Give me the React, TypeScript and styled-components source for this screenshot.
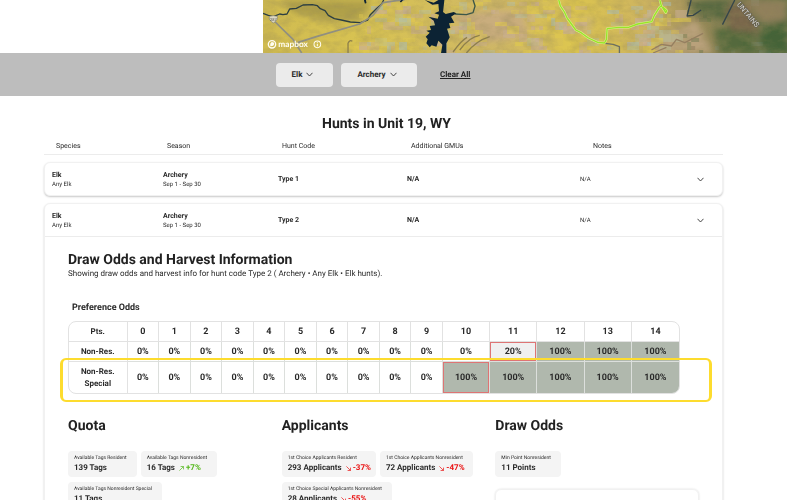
import React, { useState } from "react";
import styled, { createGlobalStyle, css } from "styled-components";

const GlobalStyle = createGlobalStyle`
  *, *::before, *::after { box-sizing: border-box; }
  html { scrollbar-width: none; }
  body {
    margin: 0;
    background: #fff;
    color: #2a2a2a;
    font-family: Roboto, "Liberation Sans", sans-serif;
    text-rendering: geometricPrecision;
  }
  h1, h2, h3, p, ul, dl, dd { margin: 0; padding: 0; }
  ul { list-style: none; }
  button { font: inherit; color: inherit; cursor: pointer; text-rendering: inherit; }
`;

const heading = css`
  font-weight: 700;
  color: #222;
`;

const MapBand = styled.header`
  display: flex;
  justify-content: flex-end;
  height: 53px;
`;

const MapSvg = styled.svg`
  display: block;
  width: 66.6%;
  height: 100%;
`;

const FilterBar = styled.nav`
  display: flex;
  align-items: center;
  gap: 8px;
  height: 43px;
  padding-left: 276px;
  background: #bdbdbd;
`;

const FilterButton = styled.button<{ $wide?: boolean }>`
  display: flex;
  align-items: center;
  justify-content: center;
  gap: 4px;
  width: ${(p) => (p.$wide ? 76 : 57)}px;
  height: 24px;
  padding: 0 5px 0 1px;
  border: 0;
  border-radius: 4px;
  background: #ebebeb;
  font-size: 8px;
  font-weight: 700;
`;

const ClearLink = styled.a`
  margin-left: 15px;
  color: #222;
  font-size: 8px;
  font-weight: 700;
  text-decoration: underline;
`;

const Page = styled.main`
  padding: 20px 64px 0 44px;
`;

const PageTitle = styled.h1`
  ${heading}
  padding-left: 6px;
  font-size: 14px;
  line-height: 16px;
  text-align: center;
`;

const huntColumns = css`
  display: grid;
  grid-template-columns: 111px 115px 129px 173px 1fr;
  align-items: center;
`;

const ColumnHeads = styled.div`
  ${huntColumns}
  grid-template-columns: 111px 115px 129px 182px 1fr;
  height: 23px;
  padding: 5px 12px 0;
  border-bottom: 1px solid #ececec;
  font-size: 7px;
`;

const HuntList = styled.ul`
  display: flex;
  flex-direction: column;
  gap: 7px;
  padding-top: 7px;
`;

const HuntCard = styled.li`
  border: 1px solid #f1f1f1;
  border-radius: 6px;
  background: #fff;
  box-shadow: 0 1px 2px rgba(0, 0, 0, 0.22);
`;

const HuntRow = styled.button`
  ${huntColumns}
  width: 100%;
  height: 32px;
  padding: 0 18px 0 7px;
  border: 0;
  background: none;
  text-align: left;
  font-size: 7px;
  font-weight: 700;
`;

const HuntNotes = styled.span`
  display: flex;
  align-items: center;
  justify-content: space-between;
`;

const Stack = styled.span`
  display: flex;
  flex-direction: column;
  padding-top: 2px;
  line-height: 9px;
`;

const Minor = styled.span`
  font-size: 6px;
  font-weight: 400;
`;

const Details = styled.section`
  min-height: 320px;
  padding: 15px 23px 0;
  border-top: 1px solid #ececec;
`;

const DetailsTitle = styled.h2`
  ${heading}
  font-size: 14px;
  line-height: 16px;
`;

const DetailsText = styled.p`
  font-size: 8px;
  line-height: 11px;
`;

const OddsTitle = styled.h3`
  margin: 24px 0 8px 4px;
  font-size: 9px;
  line-height: 10px;
`;

const OddsWrap = styled.div`
  position: relative;
`;

const Highlight = styled.div`
  position: absolute;
  left: -8px;
  right: -13px;
  bottom: -8px;
  height: 44px;
  border: 2px solid #fddc2e;
  border-left-width: 3px;
  border-right-width: 3px;
  border-radius: 6px;
`;

const OddsTable = styled.table`
  width: 97%;
  table-layout: fixed;
  border: 1px solid #e2e2e2;
  border-radius: 8px;
  border-spacing: 0;
  overflow: hidden;
  font-size: 9px;
  font-weight: 700;
  text-align: center;
`;

const OddsLine = styled.tr<{ $height: number }>`
  height: ${(p) => p.$height}px;
  line-height: 12px;
`;

const OddsHead = styled.th`
  padding: 0;
  border-right: 1px solid #e2e2e2;
  border-bottom: 1px solid #e2e2e2;
  tr:last-child > &[scope="row"] { border-bottom: 0; }
  &:first-child { font-size: 8px; }
  &:last-child { border-right: 0; }
`;

type Tone = "none" | "sure" | "low" | "first";

const OddsCell = styled.td<{ $tone: Tone }>`
  padding: 0;
  border-right: 1px solid #dcdfdc;
  border-bottom: 1px solid #dcdfdc;
  background: ${(p) => (p.$tone === "none" ? "#fff" : p.$tone === "low" ? "#f0f0f0" : "#b0b8ad")};
  ${(p) =>
    (p.$tone === "low" || p.$tone === "first") &&
    css`
      box-shadow: inset 0 0 0 1px #de7474;
    `}
  tr:last-child > & { border-bottom: 0; }
  &:last-child { border-right: 0; }
`;

const Summary = styled.div`
  display: grid;
  grid-template-columns: repeat(3, 1fr);
  gap: 10px;
  padding-top: 24px;
`;

const SummaryTitle = styled.h2`
  ${heading}
  margin-bottom: 17px;
  font-size: 14px;
  line-height: 16px;
`;

const Chips = styled.dl`
  display: flex;
  flex-wrap: wrap;
  gap: 5px 4px;
`;

const Chip = styled.div`
  height: 26px;
  padding: 4px 10px 0 6px;
  border-radius: 4px;
  background: #f4f4f4;
  white-space: nowrap;
`;

const ChipLabel = styled.dt`
  font-size: 5px;
  line-height: 7px;
`;

const ChipValue = styled.dd`
  display: flex;
  align-items: center;
  gap: 4px;
  && { margin-right: -5px; }
  font-size: 8px;
  font-weight: 700;
  line-height: 12px;
`;

const Trend = styled.span<{ $up?: boolean }>`
  display: flex;
  align-items: center;
  gap: 2px;
  color: ${(p) => (p.$up ? "#55b81c" : "#ea1212")};
`;

const ChartCard = styled.div`
  height: 120px;
  margin-top: 12px;
  border: 1px solid #f1f1f1;
  border-radius: 6px;
  box-shadow: 0 0 2px rgba(0, 0, 0, 0.15);
`;

const Chevron = () => (
  <svg width="7" height="5" viewBox="0 0 7 5" fill="none" stroke="#333" strokeWidth="0.9" aria-hidden="true">
    <path d="M0.5 0.8 3.5 4 6.5 0.8" />
  </svg>
);

const TrendArrow = ({ up }: { up?: boolean }) => (
  <svg width="5" height="5" viewBox="0 0 5 5" fill="none" stroke="currentColor" strokeWidth="0.7" aria-hidden="true">
    {up ? <path d="M0.4 4.6 4.4 0.6M1.6 0.5H4.5V3.4" /> : <path d="M0.4 0.4 4.4 4.4M4.5 1.6V4.5H1.6" />}
  </svg>
);

function makeRandom(seed: number) {
  let s = seed;
  return () => {
    s = (s * 16807) % 2147483647;
    return s / 2147483647;
  };
}

function parcels() {
  const rand = makeRandom(4711);
  const list: { x: number; y: number; w: number; h: number; fill: string; o: number }[] = [];
  for (let i = 0; i < 240; i++) {
    const x = Math.round((250 + rand() * 1250) / 12) * 12;
    const y = Math.round((rand() * 165) / 12) * 12 - 6;
    const forest = x > 1250;
    const pool = forest
      ? ["#5b7346", "#4c6840", "#9a8560", "#8a9b90", "#7b6a4e"]
      : ["#c9b096", "#b9bd98", "#b0bfae", "#cbaf8f", "#dfc850", "#dfc850"];
    list.push({
      x,
      y,
      w: 12 + Math.floor(rand() * 3) * 12,
      h: 12 + Math.floor(rand() * 2) * 12,
      fill: pool[Math.floor(rand() * pool.length)],
      o: forest ? 0.35 : 0.4 + rand() * 0.3,
    });
  }
  return list;
}

const PARCELS = parcels();

const UNIT_BORDER =
  "M887 0 892 18 904 36 912 54 938 90 954 98 976 114 1004 127 1024 129 1030 118 1032 86 1068 82 1096 82 1124 72 1166 65 1174 46 1189 22 1195 18 1190 0M1195 18 1208 38 1211 32 1200 22";

const TerrainMap = () => (
  <MapSvg viewBox="0 0 1572 159" preserveAspectRatio="none" role="img" aria-label="Map of unit 19">
    <defs>
      <linearGradient id="land">
        <stop offset="0" stopColor="#d0bb50" />
        <stop offset="0.2" stopColor="#d8c352" />
        <stop offset="0.45" stopColor="#cfb766" />
        <stop offset="0.6" stopColor="#dbc44f" />
        <stop offset="0.74" stopColor="#ccb262" />
        <stop offset="0.82" stopColor="#a0905c" />
        <stop offset="0.9" stopColor="#7d7a50" />
        <stop offset="1" stopColor="#5f7146" />
      </linearGradient>
      <filter id="relief" x="0" y="0" width="100%" height="100%">
        <feTurbulence type="fractalNoise" baseFrequency="0.025 0.04" numOctaves="4" seed="8" />
        <feColorMatrix values="0 0 0 0 0.3  0 0 0 0 0.25  0 0 0 0 0.1  1.8 0.8 0 0 -1.05" />
      </filter>
      <filter id="soft" x="-5%" y="-5%" width="110%" height="110%">
        <feGaussianBlur stdDeviation="10" />
      </filter>
    </defs>
    <rect width="1572" height="159" fill="url(#land)" />
    <g filter="url(#soft)">
      <path d="M60 0H330L290 60 200 62 90 40Z" fill="#968b45" opacity="0.6" />
      <path d="M560 40 780 30 800 110 640 130Z" fill="#c6a888" opacity="0.7" />
      <path d="M900 60 990 50 980 110 900 90Z" fill="#c3ab85" opacity="0.6" />
      <path d="M1190 110 1300 60 1350 159H1160Z" fill="#bba37e" opacity="0.9" />
    </g>
    {PARCELS.map((p, i) => (
      <rect key={i} x={p.x} y={p.y} width={p.w} height={p.h} fill={p.fill} opacity={p.o} />
    ))}
    <g filter="url(#soft)">
      <path d="M1270 0 1400 0 1390 60 1300 50Z" fill="#4b633c" opacity="0.8" />
      <path d="M1350 80 1470 100 1480 159H1370Z" fill="#4a6639" opacity="0.8" />
      <path d="M1390 20 1450 10 1490 100 1400 90Z" fill="#79634a" opacity="0.8" />
      <path d="M1440 0 1572 0V60L1500 70Z" fill="#9a8360" opacity="0.8" />
      <path d="M1490 90 1572 60V159H1500Z" fill="#456337" />
    </g>
    <rect width="1572" height="159" filter="url(#relief)" opacity="0.35" />
    <g fill="none" strokeLinejoin="round">
      <path
        d="M0 40 16 46 31 50 50 42 60 44 72 42 80 27 100 25 120 15 148 14 163 17 172 26 186 32 196 46 214 56 235 60 262 66 292 68 314 60 322 44 340 26 356 12 362 0"
        stroke="#2c3f42"
        strokeWidth="4"
      />
      <path
        d="M31 60 47 76 90 118 116 159M104 128 160 110 290 72 330 46 360 8 400 2 424 0"
        stroke="#908f80"
        strokeWidth="5"
      />
      <path d="M575 42 610 44 630 38 636 18 630 0" stroke="#3c5748" strokeWidth="4" />
      <path d="M1026 130 1050 133 1069 140V159" stroke="#6b6f61" strokeWidth="4" />
      <path d="M1165 150 1195 133 1225 138 1240 118 1265 128 1320 100M1170 159 1210 142" stroke="#957f60" strokeWidth="4" />
      <path d="M1284 0 1272 48 1290 46 1314 30M1415 0 1378 74" stroke="#34454a" strokeWidth="4" />
      <path
        d="M255 159V130Q260 118 268 124M590 150Q620 110 650 106M610 159Q640 122 680 110M570 156Q596 120 612 112"
        stroke="#8d7f4b"
        strokeWidth="4"
      />
    </g>
    <path
      d="M485 0 512 8 526 0H544L540 36 548 42 572 36 580 40 564 50 574 68 558 70 562 84 552 86 560 112 550 130V159H534L538 134 526 122 520 140 506 136 500 142 490 130 494 118 488 110 500 98 490 92 504 90 500 78 516 76 512 62 496 50 524 56 528 44 514 40 528 34 526 12 508 14Z"
      fill="#0c2334"
    />
    <path d="M305 0 308 10 306 0M418 0 412 6" stroke="#0c2334" strokeWidth="5" />
    <g fill="none" strokeLinejoin="round">
      <path d={UNIT_BORDER} stroke="#e0ee96" strokeWidth="7" />
      <path d={UNIT_BORDER} stroke="#98e628" strokeWidth="4" />
    </g>
    <g transform="translate(31 58)">
      <path d="M-12-9Q0-13 12-9 15 2 0 11-15 2-12-9Z" fill="#dcd8c4" stroke="#85826c" strokeWidth="2" />
      <text textAnchor="middle" y="4" fontFamily="Roboto, sans-serif" fontSize="12" fill="#555">
        287
      </text>
    </g>
    <text
      transform="translate(1420 14) rotate(50)"
      fontFamily="Roboto, sans-serif"
      fontSize="22"
      fill="#dcd8d0"
      stroke="#5b5a50"
      strokeWidth="3"
      paintOrder="stroke"
    >
      UNTAINS
    </text>
    <g fill="none" stroke="#fffdf2">
      <circle cx="27" cy="133" r="11" strokeWidth="4" />
      <circle cx="163" cy="133" r="10" strokeWidth="3" />
    </g>
    <path d="M22 139Q20 128 27 126 34 126 34 132 32 140 22 139Z" fill="#fffdf2" />
    <path d="M163 131V139M163 126V128" stroke="#fffdf2" strokeWidth="3" />
    <text x="46" y="140" fontFamily="Lato, sans-serif" fontSize="25" fontWeight="700" fill="#fffdf2">
      mapbox
    </text>
  </MapSvg>
);

const HEADS = ["Species", "Season", "Hunt Code", "Additional GMUs", "Notes"];
const POINTS = Array.from({ length: 15 }, (_, i) => i);

const nonResident = POINTS.map((p) => (p < 11 ? "0%" : p === 11 ? "20%" : "100%"));
const special = POINTS.map((p) => (p < 10 ? "0%" : "100%"));

function toneOf(values: string[], i: number): Tone {
  if (values[i] === "0%") return "none";
  if (values[i] !== "100%") return "low";
  return values[i - 1] === "0%" ? "first" : "sure";
}

const OddsRow = ({ name, values, height }: { name: string; values: string[]; height: number }) => (
  <OddsLine $height={height}>
    <OddsHead scope="row">{name}</OddsHead>
    {values.map((v, i) => (
      <OddsCell key={i} $tone={toneOf(values, i)}>
        {v}
      </OddsCell>
    ))}
  </OddsLine>
);

const Stat = ({ label, value, trend, up }: { label: string; value: string; trend?: string; up?: boolean }) => (
  <Chip>
    <ChipLabel>{label}</ChipLabel>
    <ChipValue>
      {value}
      {trend && (
        <Trend $up={up}>
          <TrendArrow up={up} />
          {trend}
        </Trend>
      )}
    </ChipValue>
  </Chip>
);

type HuntProps = { code: string; open: boolean; onToggle: () => void; children?: React.ReactNode };

const Hunt = ({ code, open, onToggle, children }: HuntProps) => (
  <HuntCard>
    <HuntRow type="button" aria-expanded={open} onClick={onToggle}>
      <Stack>
        Elk<Minor>Any Elk</Minor>
      </Stack>
      <Stack>
        Archery<Minor>Sep 1 - Sep 30</Minor>
      </Stack>
      <span>{code}</span>
      <span>N/A</span>
      <HuntNotes>
        <Minor>N/A</Minor>
        <Chevron />
      </HuntNotes>
    </HuntRow>
    {open && children}
  </HuntCard>
);

export default function App() {
  const [open, setOpen] = useState(true);
  return (
    <>
      <GlobalStyle />
      <MapBand>
        <TerrainMap />
      </MapBand>
      <FilterBar aria-label="Filters">
        <FilterButton type="button">
          Elk <Chevron />
        </FilterButton>
        <FilterButton type="button" $wide>
          Archery <Chevron />
        </FilterButton>
        <ClearLink href="#all">Clear All</ClearLink>
      </FilterBar>
      <Page>
        <PageTitle>Hunts in Unit 19, WY</PageTitle>
        <ColumnHeads>
          {HEADS.map((h) => (
            <span key={h}>{h}</span>
          ))}
        </ColumnHeads>
        <HuntList>
          <Hunt code="Type 1" open={false} onToggle={() => undefined} />
          <Hunt code="Type 2" open={open} onToggle={() => setOpen(!open)}>
            <Details>
              <DetailsTitle>Draw Odds and Harvest Information</DetailsTitle>
              <DetailsText>
                Showing draw odds and harvest info for hunt code Type 2 ( Archery • Any Elk • Elk hunts).
              </DetailsText>
              <OddsTitle id="odds">Preference Odds</OddsTitle>
              <OddsWrap>
                <OddsTable aria-labelledby="odds">
                  <colgroup>
                    <col style={{ width: "9.6%" }} />
                    {POINTS.map((p) => (
                      <col key={p} style={{ width: p < 10 ? "5.17%" : "7.74%" }} />
                    ))}
                  </colgroup>
                  <thead>
                    <OddsLine $height={20}>
                      <OddsHead scope="col">Pts.</OddsHead>
                      {POINTS.map((p) => (
                        <OddsHead key={p} scope="col">
                          {p}
                        </OddsHead>
                      ))}
                    </OddsLine>
                  </thead>
                  <tbody>
                    <OddsRow name="Non-Res." values={nonResident} height={20} />
                    <OddsRow name="Non-Res. Special" values={special} height={31} />
                  </tbody>
                </OddsTable>
                <Highlight />
              </OddsWrap>
              <Summary>
                <section>
                  <SummaryTitle>Quota</SummaryTitle>
                  <Chips>
                    <Stat label="Available Tags Resident" value="139 Tags" />
                    <Stat label="Available Tags Nonresident" value="16 Tags" trend="+7%" up />
                    <Stat label="Available Tags Nonresident Special" value="11 Tags" />
                  </Chips>
                </section>
                <section>
                  <SummaryTitle>Applicants</SummaryTitle>
                  <Chips>
                    <Stat label="1st Choice Applicants Resident" value="293 Applicants" trend="-37%" />
                    <Stat label="1st Choice Applicants Nonresident" value="72 Applicants" trend="-47%" />
                    <Stat label="1st Choice Special Applicants Nonresident" value="28 Applicants" trend="-55%" />
                  </Chips>
                </section>
                <section>
                  <SummaryTitle>Draw Odds</SummaryTitle>
                  <Chips>
                    <Stat label="Min Point Nonresident" value="11 Points" />
                  </Chips>
                  <ChartCard />
                </section>
              </Summary>
            </Details>
          </Hunt>
        </HuntList>
      </Page>
    </>
  );
}
